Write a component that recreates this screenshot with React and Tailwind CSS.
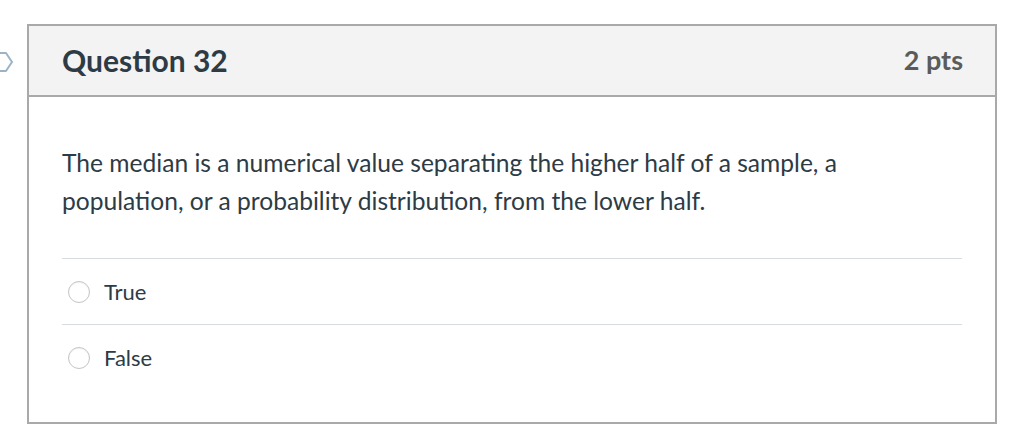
const FlagIcon = () => (
  <svg width="14" height="22" viewBox="8 0 14 22" className="block">
    <path
      d="M1 2 H14 L20 11 L14 20 H1 Z"
      fill="none"
      stroke="#9cb3c6"
      strokeWidth="2"
      strokeLinejoin="round"
    />
  </svg>
);

const Option = ({ label }) => (
  <div className="flex items-center h-[66px] border-t border-[#d9dcde]">
    <span className="ml-[6px] w-[22px] h-[22px] rounded-full border border-[#c4c4c4] bg-white shadow-[inset_0_1px_1px_rgba(0,0,0,0.05)]" />
    <span className="ml-[14px] text-[22px] text-[#2d3b45]">{label}</span>
  </div>
);

export default function App() {
  return (
    <div
      className="w-[1024px] h-[441px] bg-white flex pt-[24px]"
      style={{ fontFamily: "Lato, 'Open Sans', sans-serif" }}
    >
      <div className="w-[27px] shrink-0 pt-[27px]">
        <FlagIcon />
      </div>
      <div className="w-[970px] h-[400px] border-2 border-[#a9a9a9] flex flex-col">
        <div className="h-[71px] shrink-0 bg-[#f3f3f3] border-b-2 border-[#a9a9a9] flex items-center justify-between pl-[33px] pr-[32px]">
          <h2 className="text-[30px] font-bold text-[#2d3b45]">Question 32</h2>
          <span className="text-[27px] font-bold text-[#5b5b5b]">2 pts</span>
        </div>
        <div className="px-[33px] pt-[47px]">
          <p className="text-[24.6px] leading-[38px] text-[#2d3b45] pb-[38px]">
            The median is a numerical value separating the higher half of a sample, a population, or a probability distribution, from the lower half.
          </p>
          <Option label="True" />
          <Option label="False" />
        </div>
      </div>
    </div>
  );
}
